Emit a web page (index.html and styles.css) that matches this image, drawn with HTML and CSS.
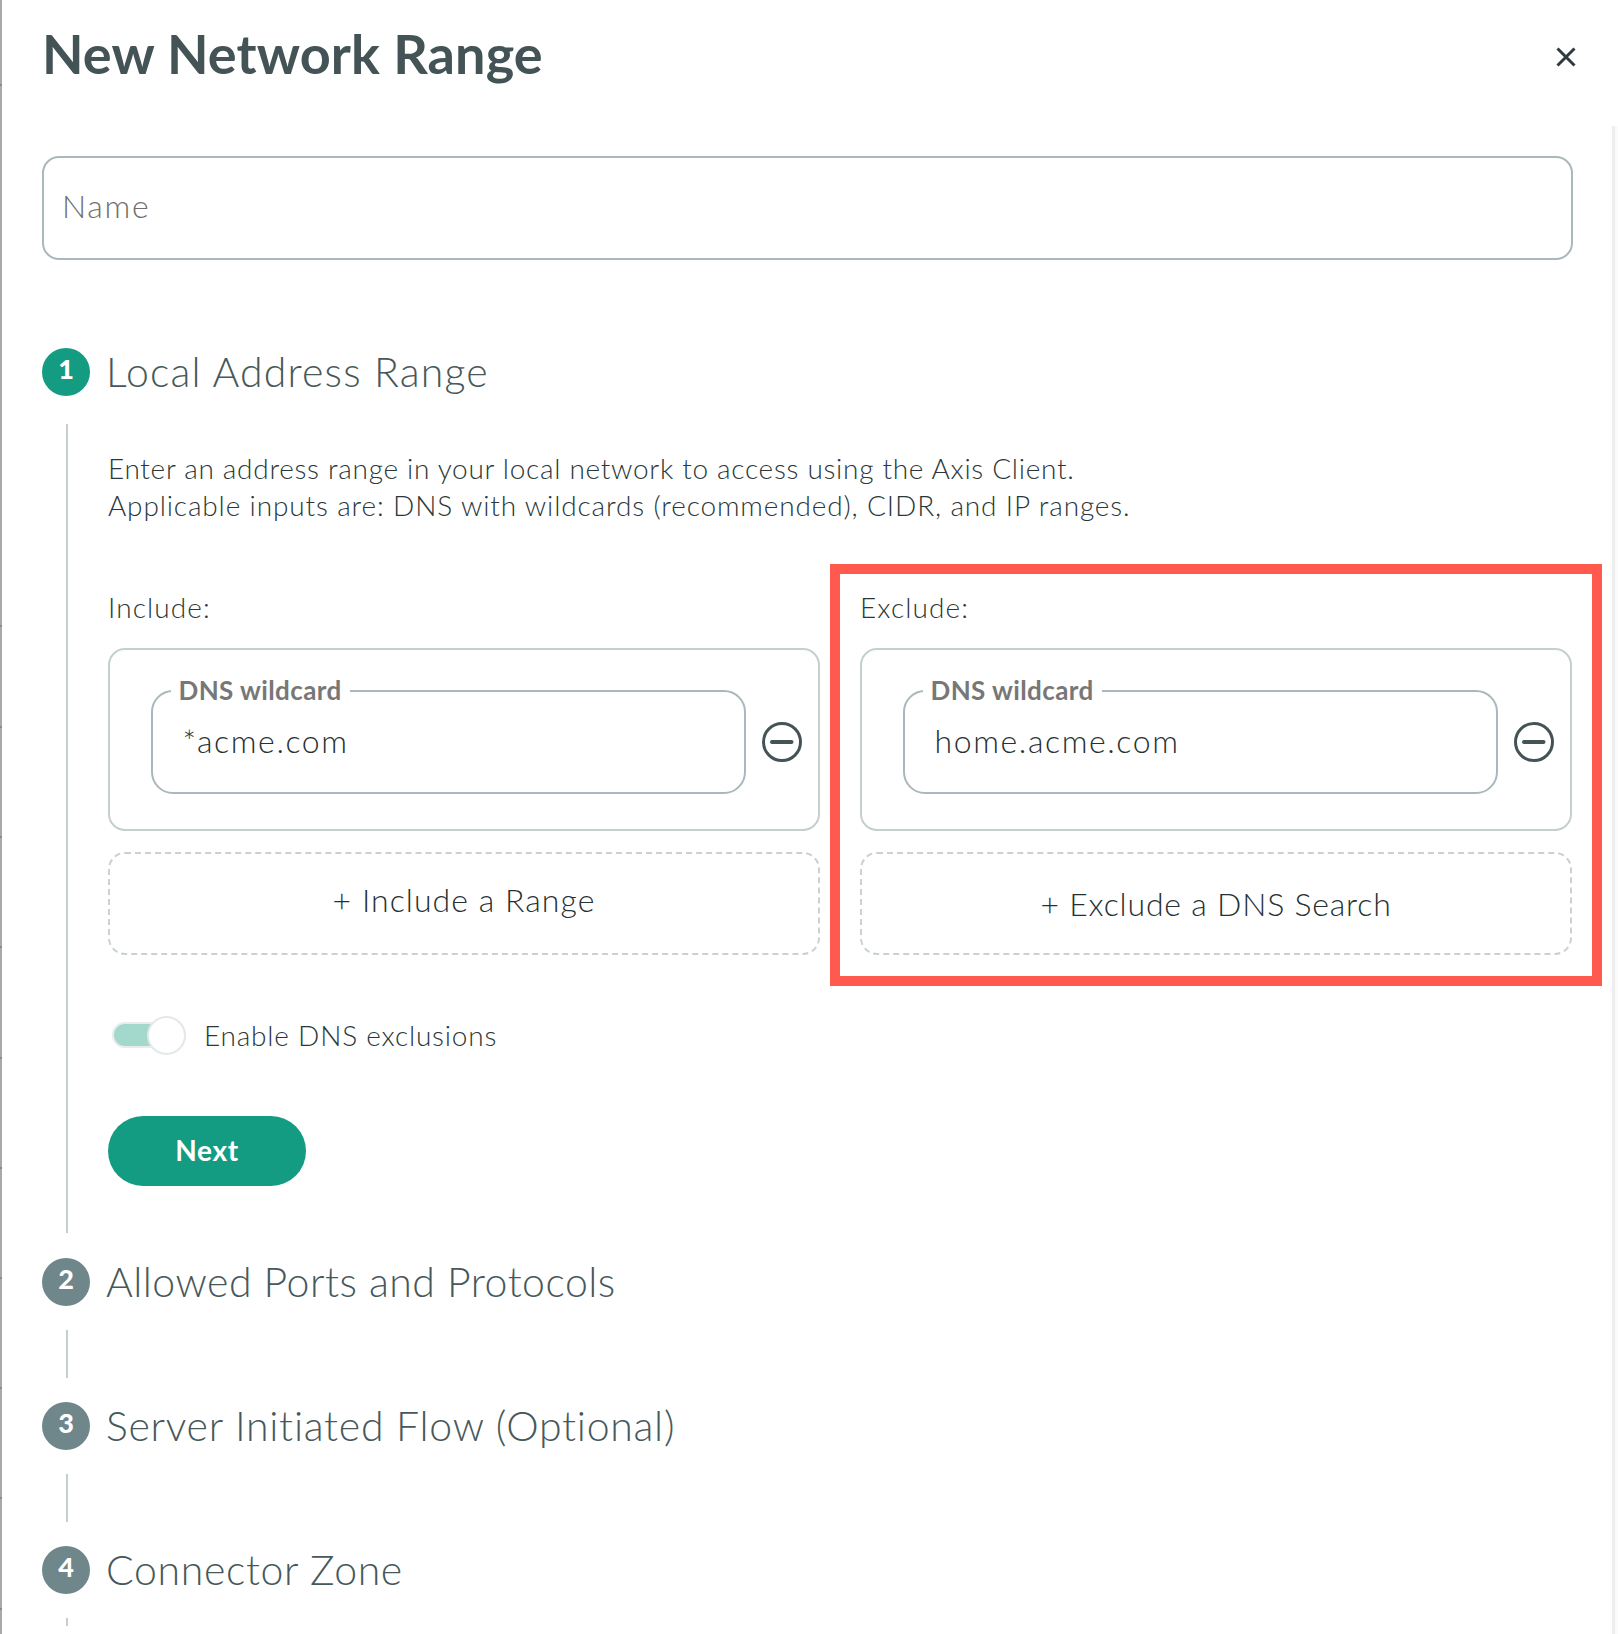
FILE: index.html
```html
<!DOCTYPE html>
<html lang="en">
<head>
<meta charset="utf-8">
<title>New Network Range</title>
<link rel="stylesheet" href="styles.css">
</head>
<body>
<div class="edge-ticks"></div>
<main class="modal">
  <header class="modal-head">
    <h1 class="title">New Network Range</h1>
    <svg class="close" viewBox="0 0 20 20" aria-label="Close"><path d="M1.5 1.5 18.500 18.500M18.500 1.500 1.500 18.500"/></svg>
  </header>
  <div class="name-field">Name</div>

  <section class="step">
    <div class="step-head"><span class="badge active">1</span><h2 class="step-title title-local">Local Address Range</h2></div>
    <div class="step-body open">
      <p class="intro"><span class="intro-first">Enter an address range in your local network to access using the Axis Client.</span><br><span class="intro-second">Applicable inputs are: DNS with wildcards (recommended), CIDR, and IP ranges.</span></p>
      <div class="columns">
        <div class="column">
          <div class="col-label">Include:</div>
          <div class="group">
            <div class="wild">
              <fieldset class="wild-field"><legend class="wild-legend">DNS wildcard</legend><span class="wild-value">*acme.com</span></fieldset>
              <svg class="minus" viewBox="0 0 40 40"><circle cx="20" cy="20" r="18.500"/><path d="M10 20h19.500"/></svg>
            </div>
          </div>
          <div class="add add-a">+ Include a Range</div>
        </div>
        <div class="column">
          <div class="col-label">Exclude:</div>
          <div class="group">
            <div class="wild">
              <fieldset class="wild-field"><legend class="wild-legend">DNS wildcard</legend><span class="wild-value">home.acme.com</span></fieldset>
              <svg class="minus" viewBox="0 0 40 40"><circle cx="20" cy="20" r="18.500"/><path d="M10 20h19.500"/></svg>
            </div>
          </div>
          <div class="add add-b">+ Exclude a DNS Search</div>
          <div class="callout"></div>
        </div>
      </div>
      <div class="toggle-row">
        <span class="toggle"><span class="thumb"></span></span>
        <span class="toggle-label">Enable DNS exclusions</span>
      </div>
      <button class="next" type="button">Next</button>
    </div>
  </section>

  <section class="step">
    <div class="step-head"><span class="badge">2</span><h2 class="step-title title-ports">Allowed Ports and Protocols</h2></div>
    <div class="step-body"></div>
  </section>
  <section class="step">
    <div class="step-head"><span class="badge">3</span><h2 class="step-title title-flow">Server Initiated Flow (Optional)</h2></div>
    <div class="step-body"></div>
  </section>
  <section class="step">
    <div class="step-head"><span class="badge">4</span><h2 class="step-title">Connector Zone</h2></div>
    <div class="step-body last"></div>
  </section>
</main>
<div class="scroll-edge"></div>
</body>
</html>
```
FILE: styles.css
```css
* { box-sizing: border-box; }
html, body { margin: 0; padding: 0; background: #fff; }
body {
  width: 1618px;
  height: 1634px;
  overflow: hidden;
  position: relative;
  font-family: Lato, "Noto Sans", sans-serif;
  color: #2b3739;
}
.edge-ticks {
  position: absolute;
  left: 0;
  top: 0;
  bottom: 0;
  width: 2px;
  background:
    linear-gradient(#8a8a8a, #8a8a8a) 0 84px / 100% 2px no-repeat,
    linear-gradient(#8a8a8a, #8a8a8a) 0 625px / 100% 2px no-repeat,
    repeating-linear-gradient(#8a8a8a 0 2px, transparent 2px 110.2px) 0 726px / 100% 100% no-repeat;
}
.modal {
  height: 1634px;
  border-left: 2px solid #a9a9a9;
  padding: 0 45px 0 40px;
}
.modal-head {
  display: flex;
  justify-content: space-between;
  align-items: center;
  height: 156px;
  padding-bottom: 48px;
}
.title {
  margin: 0;
  font-size: 54px;
  line-height: 64px;
  font-weight: 700;
  letter-spacing: .1px;
  color: #445456;
}
.close {
  width: 20px;
  height: 20px;
  margin-top: 6px;
  margin-right: -3px;
  fill: none;
  stroke: #2f3a3c;
  stroke-width: 3;
}
.name-field {
  height: 104px;
  border: 2px solid #a9b8ba;
  border-radius: 17px;
  padding: 0 0 6px 18px;
  display: flex;
  align-items: center;
  font-size: 32px;
  font-weight: 300;
  letter-spacing: 1.7px;
  color: #6f6f6f;
}
.step-head {
  display: flex;
  align-items: center;
  height: 48px;
  gap: 16px;
}
.step:first-of-type { margin-top: 88px; }
.badge {
  flex: none;
  width: 48px;
  height: 48px;
  border-radius: 50%;
  background: #6f868a;
  color: #fff;
  display: flex;
  align-items: center;
  justify-content: center;
  font-size: 27px;
  font-weight: 900;
  padding-bottom: 7px;
}
.badge.active { background: #149c82; }
.step-title {
  margin: 0;
  font-size: 41px;
  line-height: 48px;
  font-weight: 300;
  letter-spacing: .65px;
  color: #47585a;
}
.title-local { letter-spacing: 1.15px; }
.title-ports { letter-spacing: .49px; }
.title-flow { letter-spacing: .73px; }
.step-body {
  margin: 24px 0 24px 24px;
  height: 48px;
  border-left: 2px solid #c4cfd0;
}
.step-body.open {
  height: 809px;
  margin: 28px 0 25px 24px;
  padding-left: 40px;
}
.step-body.last { height: 8px; margin-bottom: 0; }
.intro {
  margin: 0;
  padding-top: 26px;
  font-size: 28px;
  line-height: 37px;
  font-weight: 300;
}
.intro-first { letter-spacing: .7px; }
.intro-second { letter-spacing: .86px; }
.columns {
  display: grid;
  grid-template-columns: 712px 712px;
  column-gap: 40px;
  margin-top: 64px;
}
.column { position: relative; }
.col-label {
  height: 60px;
  font-size: 28px;
  line-height: 38px;
  font-weight: 300;
  letter-spacing: 1.1px;
}
.group {
  height: 183px;
  border: 2px solid #c4cfd0;
  border-radius: 17px;
  padding: 29.500px 16px 0 41px;
}
.wild {
  display: flex;
  align-items: flex-start;
  justify-content: space-between;
}
.wild-field {
  width: 595px;
  height: 114.500px;
  margin: 0;
  padding: 0 0 0 29.500px;
  border: 2px solid #a9b8ba;
  border-radius: 22px;
}
.wild-legend {
  margin-left: -12px;
  padding: 0 8px 3px;
  font-size: 26px;
  line-height: 20px;
  font-weight: 700;
  letter-spacing: .4px;
  color: #777;
}
.wild-value {
  display: block;
  padding-top: 18px;
  font-size: 32px;
  line-height: 40px;
  font-weight: 300;
  letter-spacing: 1.6px;
  color: #263133;
}
.minus {
  width: 40px;
  height: 40px;
  margin-top: 42.500px;
  fill: none;
  stroke: #445456;
}
.minus circle { stroke-width: 3; }
.minus path { stroke-width: 4; stroke-linecap: round; }
.add {
  height: 103px;
  margin-top: 21px;
  border: 2px dashed #c9d1d2;
  border-radius: 17px;
  display: flex;
  align-items: center;
  justify-content: center;
  font-size: 32px;
  font-weight: 300;
  color: #263133;
}
.add-a { padding-bottom: 8px; letter-spacing: 1.05px; }
.add-b { letter-spacing: .8px; }
.callout {
  position: absolute;
  left: -30px;
  right: -30px;
  top: -24px;
  bottom: -31px;
  border: 10px solid #ff5a4d;
  pointer-events: none;
}
.toggle-row {
  display: flex;
  align-items: center;
  margin-top: 60px;
  height: 40px;
}
.toggle {
  position: relative;
  width: 74px;
  height: 26px;
  margin-left: 4px;
  border-radius: 13px;
  background: #a3d8cc;
  border: 2px solid #e8ecec;
}
.thumb {
  position: absolute;
  right: -2px;
  top: -8px;
  width: 39px;
  height: 39px;
  border-radius: 50%;
  background: #fff;
  border: 2px solid #e3e8e8;
}
.toggle-label {
  margin-left: 18px;
  font-size: 28px;
  font-weight: 300;
  letter-spacing: .8px;
}
.next {
  display: block;
  width: 198px;
  height: 70px;
  margin-top: 61px;
  padding-bottom: 3px;
  border: 0;
  border-radius: 35px;
  background: #149c82;
  color: #fff;
  font-family: inherit;
  font-size: 28px;
  font-weight: 700;
  letter-spacing: .6px;
}
.scroll-edge {
  position: absolute;
  right: 0;
  top: 126px;
  bottom: 0;
  width: 6px;
  background: #fbfbfb;
  border-left: 3px solid #eee;
}
```
